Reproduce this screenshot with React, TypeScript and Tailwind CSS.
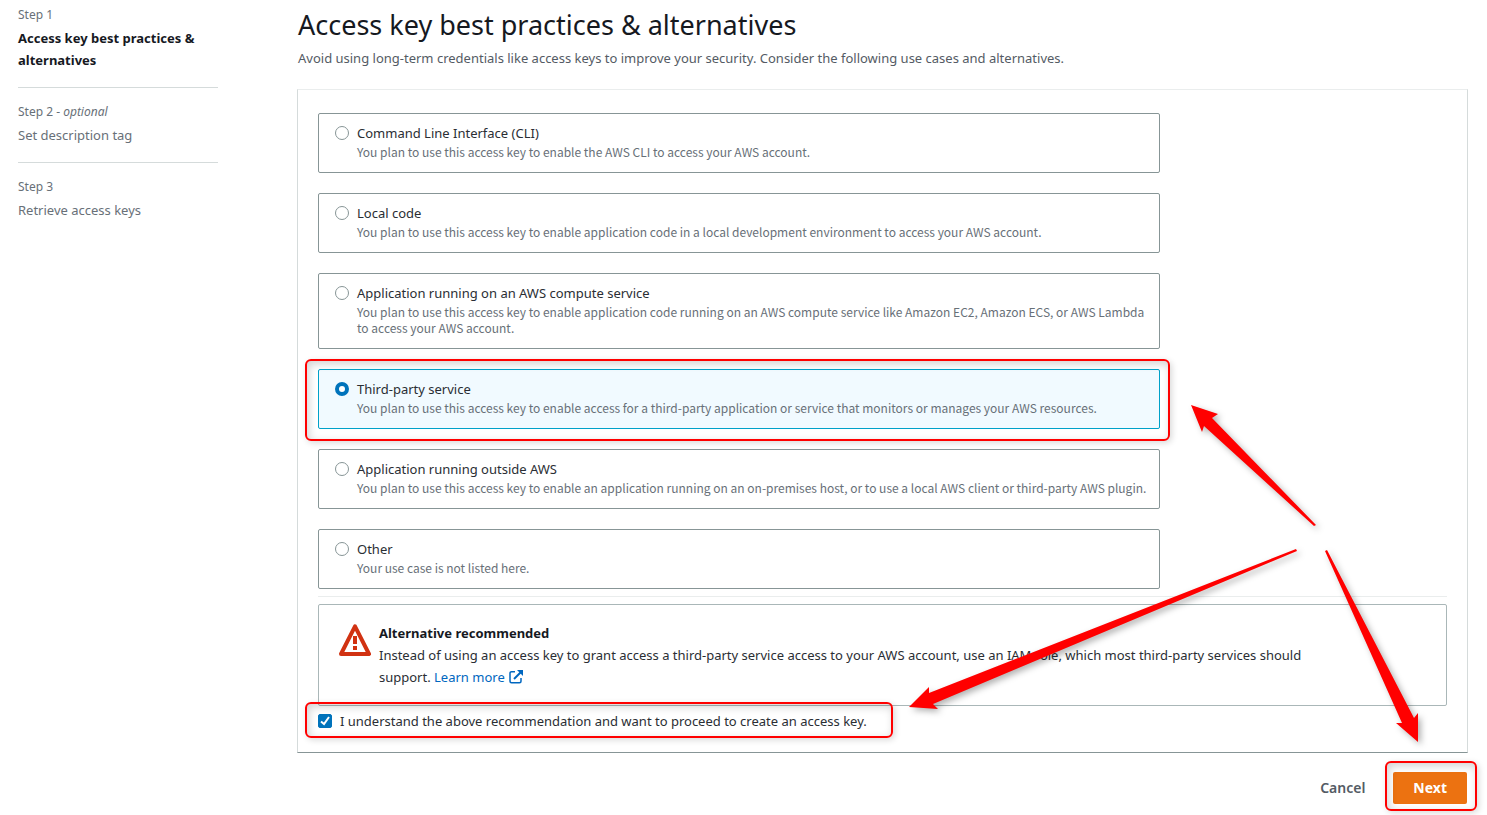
import type { ReactNode } from "react";

type UseCase = { id: string; title: string; description: string; highlighted?: boolean };

const useCases: UseCase[] = [
  {
    id: "cli",
    title: "Command Line Interface (CLI)",
    description: "You plan to use this access key to enable the AWS CLI to access your AWS account.",
  },
  {
    id: "local",
    title: "Local code",
    description:
      "You plan to use this access key to enable application code in a local development environment to access your AWS account.",
  },
  {
    id: "compute",
    title: "Application running on an AWS compute service",
    description:
      "You plan to use this access key to enable application code running on an AWS compute service like Amazon EC2, Amazon ECS, or AWS Lambda to access your AWS account.",
  },
  {
    id: "third-party",
    title: "Third-party service",
    description:
      "You plan to use this access key to enable access for a third-party application or service that monitors or manages your AWS resources.",
    highlighted: true,
  },
  {
    id: "outside",
    title: "Application running outside AWS",
    description:
      "You plan to use this access key to enable an application running on an on-premises host, or to use a local AWS client or third-party AWS plugin.",
  },
  { id: "other", title: "Other", description: "Your use case is not listed here." },
];

const arrows = [
  "1191,405 1218,414 1212,418 1316,525 1314,526 1204,426 1202,432",
  "909,707 929,687 929,693 1296,549 1297,551 933,704 938,709",
  "1418,742 1418,713 1414,718 1327,550 1325,551 1402,723 1396,723",
];

function Highlight({ className }: { className: string }) {
  return (
    <span
      aria-hidden="true"
      className={`pointer-events-none absolute z-10 rounded-md border-2 border-[#ff0000] shadow-[2px_2px_6px_rgba(0,0,0,0.15),inset_2px_3px_8px_rgba(0,0,0,0.18)] ${className}`}
    />
  );
}

function Step({ label, children }: { label: ReactNode; children: ReactNode }) {
  return (
    <li className="border-b border-[#d5dbdb] pt-3 pb-4 first:pt-0 last:border-b-0">
      <div className="text-xs leading-6 text-[#687078]">{label}</div>
      {children}
    </li>
  );
}

function UseCaseTile({ item }: { item: UseCase }) {
  return (
    <label
      htmlFor={item.id}
      className="relative flex gap-2 rounded-xs border border-[#879596] bg-white pt-2 pr-2 pb-3 pl-4 has-checked:border-[#00a1c9] has-checked:bg-[#f1faff]"
    >
      <input
        id={item.id}
        type="radio"
        name="use-case"
        defaultChecked={item.highlighted}
        className="mt-1 size-3.5 shrink-0 appearance-none rounded-full border border-[#879596] bg-white checked:border-4 checked:border-[#0073bb]"
      />
      <span className="block">
        <span className="block leading-[22px] text-[#2a2e34]">{item.title}</span>
        <span className="block font-['Noto_Sans_CJK_SC','Noto_Sans',sans-serif] text-xs leading-4 text-[#687078]">
          {item.description}
        </span>
      </span>
      {item.highlighted && <Highlight className="-top-[11px] -right-[11px] -bottom-[13px] -left-[14px]" />}
    </label>
  );
}

function WarningIcon() {
  return (
    <svg viewBox="0 0 16 16" className="size-8 shrink-0" fill="none" stroke="#d13212" strokeWidth="2" strokeLinejoin="round" aria-hidden="true">
      <path d="M8 1.2 15 15H1z" />
      <path d="M8 6v4M8 11v2" />
    </svg>
  );
}

function ExternalIcon() {
  return (
    <svg viewBox="0 0 16 16" className="inline size-4 align-[-3px]" fill="none" stroke="currentColor" strokeWidth="1.5" aria-hidden="true">
      <path d="M6 10 13 3" strokeWidth="2" />
      <path d="M9 1h6v6z" fill="currentColor" stroke="none" />
      <path d="M13 9v3.2a1.5 1.5 0 0 1-1.5 1.5h-8A1.5 1.5 0 0 1 2 12.200V4.200A1.500 1.500 0 0 1 3.500 2.700H7" />
    </svg>
  );
}

export default function App() {
  return (
    <div className="flex gap-20 bg-white pt-[3px] pr-5 pb-3 pl-[18px] font-['Noto_Sans',sans-serif] text-[13px] leading-[22px] text-[#16191f]">
      <aside className="w-[200px] shrink-0">
        <ol>
          <Step label="Step 1">
            <div className="font-bold">Access key best practices &amp; alternatives</div>
          </Step>
          <Step label={<>Step 2 - <em>optional</em></>}>
            <div className="text-[#687078]">Set description tag</div>
          </Step>
          <Step label="Step 3">
            <div className="text-[#687078]">Retrieve access keys</div>
          </Step>
        </ol>
      </aside>

      <main className="relative min-w-0 flex-1">
        <h1 className="pt-1 text-[27px] leading-9">Access key best practices &amp; alternatives</h1>
        <p className="pt-1 text-[#545b64]">
          Avoid using long-term credentials like access keys to improve your security. Consider the following use cases
          and alternatives.
        </p>

        <section className="-mx-px mt-5 border border-[#d5dbdb] border-t-[#eaeded] border-b-[#879596] px-5 pt-[23px] pb-5">
          <fieldset aria-label="Use case" className="flex w-[calc(75%-5px)] flex-col gap-5">
            {useCases.map((item) => (
              <UseCaseTile key={item.id} item={item} />
            ))}
          </fieldset>

          <hr className="mt-[7px] mb-[7px] border-[#eaeded]" />

          <div className="flex gap-2 rounded-xs border border-[#aab7b8] py-[17px] pr-24 pl-5">
            <div className="pt-0.5">
              <WarningIcon />
            </div>
            <div>
              <h2 className="font-bold">Alternative recommended</h2>
              <p className="text-[#2a2e34]">
                Instead of using an access key to grant access a third-party service access to your AWS account, use an
                IAM role, which most third-party services should support.{" "}
                <a href="#" className="text-[#0067c0]">
                  Learn more <ExternalIcon />
                </a>
              </p>
            </div>
          </div>

          <label htmlFor="ack" className="relative mt-1 flex w-fit items-center gap-2 pr-4 text-[#2a2e34]">
            <span className="relative flex size-3.5">
              <input
                id="ack"
                type="checkbox"
                defaultChecked
                className="peer size-3.5 appearance-none rounded-xs border border-[#879596] checked:border-[#0073bb] checked:bg-[#0073bb]"
              />
              <svg viewBox="0 0 14 14" className="pointer-events-none absolute inset-0 hidden peer-checked:block" fill="none" stroke="white" strokeWidth="2" aria-hidden="true">
                <path d="M3 7.5 6 10l5-7" />
              </svg>
            </span>
            I understand the above recommendation and want to proceed to create an access key.
            <Highlight className="-top-2 -right-2.5 -bottom-1.5 -left-[13px]" />
          </label>
        </section>

        <div className="flex justify-end pt-[19px]">
          <button type="button" className="h-8 px-7 text-sm font-semibold text-[#545b64]">
            Cancel
          </button>
          <div className="relative">
            <button type="button" className="h-8 rounded-xs bg-[#ec7211] px-5 text-sm font-bold text-white">
              Next
            </button>
            <Highlight className="-top-[11px] -right-2.5 -bottom-[7px] -left-2" />
          </div>
        </div>

        <svg
          viewBox="890 400 577 360"
          className="pointer-events-none absolute top-[397px] right-0 z-20 h-[360px] w-[577px] drop-shadow-[3px_3px_3px_rgba(0,0,0,0.3)]"
          fill="#ff0000"
          aria-hidden="true"
        >
          {arrows.map((points) => (
            <polygon key={points} points={points} />
          ))}
        </svg>
      </main>
    </div>
  );
}
